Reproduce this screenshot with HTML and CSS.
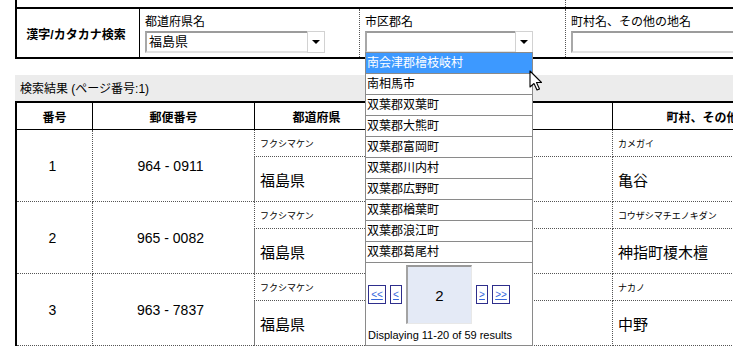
FILE: index.html
```html
<!DOCTYPE html>
<html lang="ja">
<head>
  <meta charset="UTF-8" />
  <title>郵便番号検索</title>
  <link rel="stylesheet" href="styles.css">
</head>
<body>
  <div class="page">

    <div class="search">
      <div class="prev-row"><div class="prev-left"></div><div></div></div>
      <div class="search-row">
        <div class="search-title">漢字/カタカナ検索</div>
        <div class="field">
          <div class="field-label">都道府県名</div>
          <div class="select pref-select"><span class="select-value">福島県</span><span class="select-arrow"></span></div>
        </div>
        <div class="field city-field">
          <div class="field-label">市区郡名</div>
          <div class="select city-select"><span class="select-value"></span><span class="select-arrow"></span></div>

          <div class="dropdown">
            <div class="option selected">南会津郡檜枝岐村</div>
            <div class="option">南相馬市</div>
            <div class="option">双葉郡双葉町</div>
            <div class="option">双葉郡大熊町</div>
            <div class="option">双葉郡富岡町</div>
            <div class="option">双葉郡川内村</div>
            <div class="option">双葉郡広野町</div>
            <div class="option">双葉郡楢葉町</div>
            <div class="option">双葉郡浪江町</div>
            <div class="option">双葉郡葛尾村</div>
            <div class="pager">
              <div class="pager-links">
                <a class="page-link wide">&lt;&lt;</a>
                <a class="page-link">&lt;</a>
                <div class="page-current">2</div>
                <a class="page-link">&gt;</a>
                <a class="page-link wide">&gt;&gt;</a>
              </div>
              <div class="pager-info">Displaying 11-20 of 59 results</div>
            </div>
          </div>

          <svg class="cursor" width="14" height="22" viewBox="0 0 14 22">
            <path d="M1 1 L1 17 L5 13.5 L8 20 L10.5 19 L7.5 12.5 L12.5 12.5 Z" fill="#fff" stroke="#000" stroke-width="1.1" stroke-linejoin="round"/>
          </svg>
        </div>
        <div class="field">
          <div class="field-label">町村名、その他の地名</div>
          <div class="text-input"></div>
        </div>
      </div>
    </div>

    <div class="result-bar">検索結果 (ページ番号:1)</div>

    <div class="results">
      <div class="result-head">
        <div class="head-cell">番号</div>
        <div class="head-cell">郵便番号</div>
        <div class="head-cell">都道府県</div>
        <div class="head-cell">市区町村</div>
        <div class="head-cell">町村、その他の地名</div>
      </div>

      <div class="result-row">
        <div class="cell num">1</div>
        <div class="cell zip">964 - 0911</div>
        <div class="cell kana pref">フクシマケン</div>
        <div class="cell kana city"></div>
        <div class="cell kana town">カメガイ</div>
        <div class="cell kanji pref">福島県</div>
        <div class="cell kanji city"></div>
        <div class="cell kanji town">亀谷</div>
      </div>

      <div class="result-row">
        <div class="cell num">2</div>
        <div class="cell zip">965 - 0082</div>
        <div class="cell kana pref">フクシマケン</div>
        <div class="cell kana city"></div>
        <div class="cell kana town">コウザシマチエノキダン</div>
        <div class="cell kanji pref">福島県</div>
        <div class="cell kanji city"></div>
        <div class="cell kanji town">神指町榎木檀</div>
      </div>

      <div class="result-row">
        <div class="cell num">3</div>
        <div class="cell zip">963 - 7837</div>
        <div class="cell kana pref">フクシマケン</div>
        <div class="cell kana city"></div>
        <div class="cell kana town">ナカノ</div>
        <div class="cell kanji pref">福島県</div>
        <div class="cell kanji city"></div>
        <div class="cell kanji town">中野</div>
      </div>
    </div>

  </div>
</body>
</html>
```

FILE: styles.css
```css
html, body {
  margin: 0;
  overflow: hidden;
}
body {
  font-family: "Liberation Sans", "Noto Sans CJK JP", sans-serif;
  background-color: #fff;
  color: #000;
}
.page {
  width: 813px;
  padding-left: 15px;
}

/* search form */
.search {
  border-left: 2px solid #000;
}
.prev-row {
  display: grid;
  grid-template-columns: 549px 1fr;
  height: 7px;
}
.prev-left {
  border-right: 1px dotted #555;
}
.search-row {
  display: grid;
  grid-template-columns: 123px 220px 206px 1fr;
  height: 52px;
  box-sizing: border-box;
  border-top: 2px solid #000;
  border-bottom: 2px solid #000;
}
.search-title {
  display: flex;
  align-items: center;
  justify-content: center;
  padding-right: 4px;
  border-right: 1px solid #000;
  font-size: 12px;
  font-weight: bold;
}
.field {
  padding: 6px 0 0 5px;
  border-right: 1px dotted #555;
}
.field:last-child {
  border-right: none;
}
.city-field {
  position: relative;
}
.field-label {
  font-size: 12px;
  line-height: 14px;
  margin-bottom: 2px;
}
.select {
  display: flex;
  height: 22px;
  box-sizing: border-box;
}
.pref-select {
  width: 180px;
}
.city-select {
  width: 168px;
}
.select-value {
  flex: 1;
  box-sizing: border-box;
  border-top: 2px solid #9c9c9c;
  border-left: 2px solid #a8a8a8;
  border-bottom: 2px solid #e2e2e2;
  padding-left: 2px;
  font-size: 13px;
  line-height: 18px;
  background: #fff;
}
.select-arrow {
  width: 18px;
  box-sizing: border-box;
  border: 1px solid #d2d2d2;
  background: #fff;
  display: flex;
  align-items: center;
  justify-content: center;
}
.select-arrow::after {
  content: "";
  border-left: 4px solid transparent;
  border-right: 4px solid transparent;
  border-top: 4px solid #000;
}
.text-input {
  height: 22px;
  box-sizing: border-box;
  border-top: 2px solid #9c9c9c;
  border-left: 2px solid #a8a8a8;
  border-bottom: 2px solid #e2e2e2;
}

/* open dropdown of 市区郡名 */
.dropdown {
  position: absolute;
  left: 5px;
  top: 43px;
  width: 168px;
  box-sizing: border-box;
  border: 1px solid #8a8a8a;
  background: #fff;
  z-index: 5;
}
.option {
  height: 21px;
  box-sizing: border-box;
  border-bottom: 1px solid #8a8a8a;
  padding-left: 1px;
  font-size: 12px;
  line-height: 20px;
  white-space: nowrap;
}
.option.selected {
  background-color: #3d99ff;
  color: #fff;
}
.pager {
  height: 82px;
  box-sizing: border-box;
  padding: 2px 0 0 2px;
}
.pager-links {
  display: flex;
  align-items: center;
  gap: 4px;
}
.page-link {
  width: 12px;
  height: 19px;
  box-sizing: border-box;
  border: 1px solid #2e2e8c;
  color: #3366dd;
  text-decoration: underline;
  font-size: 10px;
  line-height: 17px;
  text-align: center;
}
.page-link.wide {
  width: 18px;
}
.page-current {
  width: 66px;
  height: 59px;
  box-sizing: border-box;
  border-top: 2px solid #999;
  border-left: 2px solid #a3a3a3;
  border-right: 1px solid #e8e8e8;
  border-bottom: 1px solid #e8e8e8;
  background: #e4eaf6;
  font-size: 15px;
  display: flex;
  align-items: center;
  justify-content: center;
}
.pager-info {
  font-size: 11px;
  line-height: 13px;
  margin-top: 5px;
  white-space: nowrap;
}
.cursor {
  position: absolute;
  left: 169px;
  top: 61px;
  z-index: 6;
}

/* results */
.result-bar {
  margin-top: 16px;
  height: 26px;
  box-sizing: border-box;
  padding: 6px 0 0 5px;
  background-color: #ececec;
  font-size: 12px;
  line-height: 16px;
}
.results {
  border-left: 2px solid #000;
  border-top: 2px solid #000;
}
.result-head {
  display: grid;
  grid-template-columns: 76px 162px 124px 234px 1fr;
  height: 27px;
  box-sizing: border-box;
  border-bottom: 1px solid #000;
}
.head-cell {
  display: flex;
  align-items: center;
  justify-content: center;
  border-right: 1px solid #000;
  font-size: 12px;
  font-weight: bold;
  white-space: nowrap;
}
.head-cell:last-child {
  border-right: none;
}
.result-row {
  display: grid;
  grid-template-columns: 76px 161px 125px 234px 1fr;
  grid-template-rows: 27px 45px;
}
.cell {
  box-sizing: border-box;
  border-bottom: 1px dotted #555;
  display: flex;
  align-items: center;
  white-space: nowrap;
}
.num, .zip {
  grid-row: 1 / 3;
  justify-content: center;
  font-size: 14px;
}
.num {
  grid-column: 1;
  padding-right: 4px;
  border-right: 1px dotted #555;
}
.zip {
  grid-column: 2;
  padding-right: 6px;
}
.kana {
  grid-row: 1;
  font-size: 9px;
  padding-left: 5px;
}
.kanji {
  grid-row: 2;
  font-size: 15px;
  padding-left: 5px;
}
.pref {
  grid-column: 3;
  border-left: 1px dotted #555;
  border-right: 1px dotted #555;
}
.kanji.pref {
  border-left: 1px solid #7a7a7a;
}
.city {
  grid-column: 4;
  border-right: 1px dotted #555;
}
.town {
  grid-column: 5;
}
```
